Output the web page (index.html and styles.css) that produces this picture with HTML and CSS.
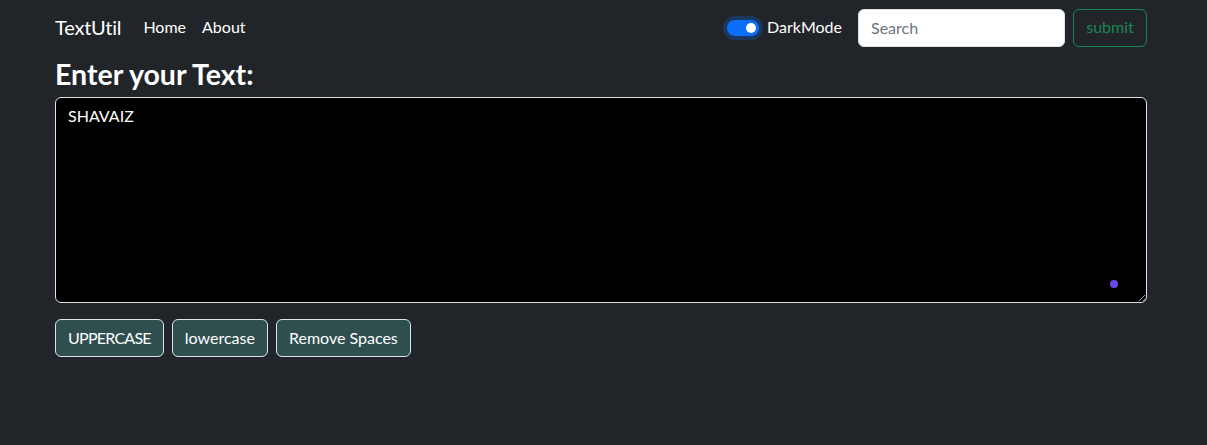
FILE: index.html
```html
<!DOCTYPE html>
<html lang="en">
<head>
<meta charset="utf-8">
<title>TextUtil</title>
<link rel="stylesheet" href="styles.css">
</head>
<body>
<nav class="navbar">
  <div class="nav-inner">
    <a class="brand" href="#">TextUtil</a>
    <ul class="nav-links">
      <li><a href="#">Home</a></li>
      <li><a href="#">About</a></li>
    </ul>
    <div class="nav-right">
      <label class="switch">
        <span class="track"><span class="knob"></span></span>
        <span class="switch-label">DarkMode</span>
      </label>
      <form class="search-form">
        <input class="search" type="search" placeholder="Search">
        <button class="submit" type="button">submit</button>
      </form>
    </div>
  </div>
</nav>
<main class="container">
  <h1 class="title">Enter your Text:</h1>
  <div class="text-wrap">
    <textarea class="textbox" rows="8">SHAVAIZ</textarea>
    <span class="dot"></span>
  </div>
  <div class="actions">
    <button class="btn btn-caps" type="button">UPPERCASE</button>
    <button class="btn" type="button">lowercase</button>
    <button class="btn" type="button">Remove Spaces</button>
  </div>
</main>
</body>
</html>
```

FILE: styles.css
```css
* { box-sizing: border-box; }
html, body { margin: 0; }
body {
  background: #212529;
  color: #fff;
  font-family: Lato, "Liberation Sans", Arial, sans-serif;
  font-size: 16px;
  line-height: 24px;
}
.navbar { padding: 8px 0; }
.nav-inner {
  margin-left: 55px;
  width: 1092px;
  display: flex;
  align-items: center;
}
.brand {
  color: #fff;
  text-decoration: none;
  font-size: 20px;
  line-height: 30px;
  margin-right: 14px;
  padding: 3px 0 5px;
  letter-spacing: -0.2px;
}
.nav-links {
  list-style: none;
  margin: 0;
  padding: 0;
  display: flex;
}
.nav-links a {
  display: block;
  padding: 7px 8px 9px;
  color: #fff;
  text-decoration: none;
}
.nav-right {
  margin-left: auto;
  display: flex;
  align-items: center;
}
.switch {
  display: flex;
  align-items: center;
  margin-right: 16px;
}
.track {
  width: 32px;
  height: 16px;
  border-radius: 8px;
  background: #0d6efd;
  box-shadow: 0 0 0 4px rgba(13, 110, 253, 0.25);
  position: relative;
  margin-right: 8px;
}
.knob {
  position: absolute;
  right: 3px;
  top: 3px;
  width: 10px;
  height: 10px;
  border-radius: 50%;
  background: #fff;
}
.switch-label {
  color: #fff;
  position: relative;
  top: -1px;
}
.search-form { display: flex; }
.search {
  width: 207px;
  height: 38px;
  padding: 5px 12px 7px;
  border: 1px solid #dee2e6;
  border-radius: 6px;
  font: inherit;
  background: #fff;
  color: #212529;
  margin-right: 8px;
}
.search::placeholder { color: #6c757d; }
.submit {
  height: 38px;
  width: 74px;
  padding: 5px 12px 7px;
  border: 1px solid #198754;
  border-radius: 6px;
  background: transparent;
  color: #198754;
  font: inherit;
}
.container {
  margin-left: 55px;
  width: 1092px;
}
.title {
  font-size: 28.5px;
  font-weight: 700;
  line-height: 34px;
  margin: 1px 0 6px;
}
.text-wrap { position: relative; }
.textbox {
  display: block;
  width: 100%;
  height: 206px;
  background: #000;
  color: #fff;
  border: 1px solid #dee2e6;
  border-radius: 6px;
  padding: 6px 12px;
  font: inherit;
  resize: vertical;
}
.dot {
  position: absolute;
  left: 1055px;
  top: 183px;
  width: 8px;
  height: 8px;
  border-radius: 50%;
  background: #6c47e8;
}
.actions {
  display: flex;
  gap: 8px;
  margin-top: 16px;
}
.btn {
  height: 38px;
  padding: 6px 12px;
  border: 1px solid #dee2e6;
  border-radius: 6px;
  background: #2f4f4f;
  color: #fff;
  font: inherit;
}
.btn-caps { letter-spacing: -0.75px; }
```
